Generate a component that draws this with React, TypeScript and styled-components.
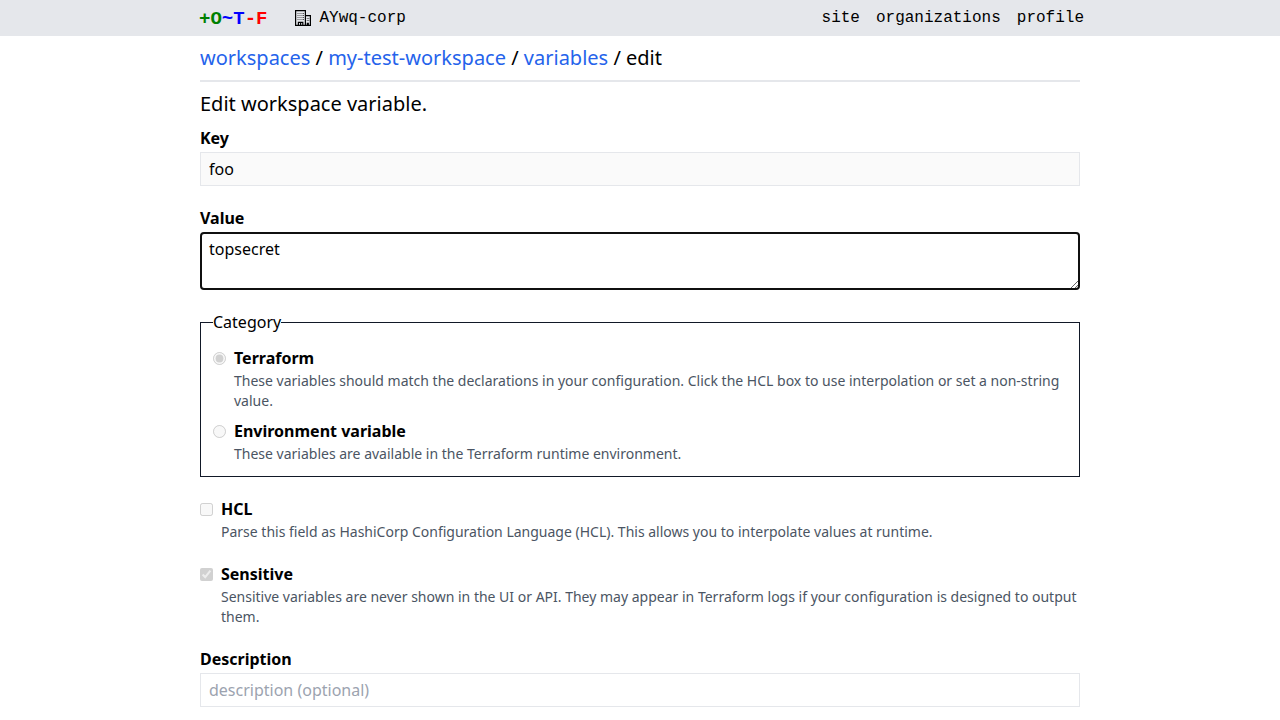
import React from "react";
import styled, { createGlobalStyle } from "styled-components";

const GlobalStyle = createGlobalStyle`
  *, *::before, *::after { box-sizing: border-box; }
  body {
    margin: 0;
    background: #fff;
    color: #000;
    font-family: "Noto Sans", sans-serif;
    font-size: 16px;
    line-height: 24px;
  }
  a { text-decoration: none; }
`;

const Header = styled.header`
  background: #e5e7eb;
  font-family: "Liberation Mono", monospace;
`;

const HeaderInner = styled.div`
  display: flex;
  align-items: center;
  max-width: 888px;
  height: 36px;
  margin: 0 auto;
`;

const Logo = styled.a`
  padding: 2px 0 0 3px;
  font-size: 19px;
  font-weight: 700;
  color: green;
`;

const LogoPart = styled.span<{ $color: string }>`
  color: ${(p) => p.$color};
`;

const OrgLink = styled.a`
  display: flex;
  align-items: center;
  gap: 8px;
  margin-left: 28px;
  color: #000;
  svg { display: block; }
`;

const Nav = styled.nav`
  display: flex;
  gap: 16px;
  margin-left: auto;
`;

const NavLink = styled.a`
  color: #000;
`;

const Main = styled.main`
  max-width: 880px;
  margin: 0 auto;
  padding: 8px 0 12px;
`;

const Breadcrumbs = styled.nav`
  padding-bottom: 8px;
  border-bottom: 2px solid #e5e7eb;
  font-size: 20px;
  line-height: 28px;
`;

const Crumb = styled.a`
  color: #2563eb;
`;

const Title = styled.h1`
  margin: 8px 0;
  font-size: 20px;
  font-weight: 400;
  line-height: 28px;
`;

const Form = styled.form`
  display: flex;
  flex-direction: column;
  gap: 20px;
`;

const Field = styled.div`
  display: flex;
  flex-direction: column;
  gap: 2px;
`;

const Label = styled.label`
  font-weight: 700;
`;

const TextInput = styled.input`
  width: 100%;
  padding: 4px 8px;
  border: 1px solid #e5e7eb;
  border-radius: 0;
  background: #fff;
  color: #000;
  font: inherit;
  &:read-only { background: #fafafa; }
  &::placeholder { color: #9ca3af; opacity: 1; }
`;

const TextArea = styled.textarea`
  display: block;
  width: 100%;
  padding: 4px 8px;
  border: 1px solid #e5e7eb;
  border-radius: 4px;
  outline: 2px solid #101010;
  outline-offset: -2px;
  color: #000;
  font: inherit;
`;

const Fieldset = styled.fieldset`
  display: flex;
  flex-direction: column;
  gap: 8px;
  min-width: 0;
  margin: 0;
  padding: 12px;
  border: 1px solid #111827;
`;

const Legend = styled.legend`
  padding: 0;
`;

const ChoiceRow = styled.div`
  display: grid;
  grid-template-columns: 13px 1fr;
  column-gap: 8px;
  row-gap: 1px;
`;

const ChoiceInput = styled.input`
  width: 13px;
  height: 13px;
  margin: 6px 0 0;
`;

const Help = styled.span`
  grid-column: 2;
  color: #4b5563;
  font-size: 14px;
  line-height: 20px;
`;

const windowRows = [3, 5, 7, 9];
const windowColumns = [2.6, 4.6, 6.6, 8.2];

function BuildingIcon() {
  return (
    <svg width="16" height="16" viewBox="0 0 16 16" aria-hidden="true">
      <path
        fill="#000"
        fillRule="evenodd"
        d="M0 0h11v5h5v11H0zM1.2 1.2v13.6h1.6v-3h5.6v3h1.4V1.2zM11 6.2v8.6h.7v-2h2.2v2h.9V6.2zM4 13v1.8h1V13zM6.2 13v1.8h1V13z"
      />
      {windowRows.map((y) =>
        windowColumns.map((x) => (
          <rect key={`${x}-${y}`} x={x} y={y} width=".8" height=".8" fill="#000" />
        )),
      )}
      <path
        fill="#000"
        d="M11.8 8h.8v.8h-.8zM13.4 8h.8v.8h-.8zM11.8 10h.8v.8h-.8zM13.4 10h.8v.8h-.8z"
      />
    </svg>
  );
}

interface ChoiceProps {
  id: string;
  type: "radio" | "checkbox";
  name: string;
  label: string;
  help: string;
  checked?: boolean;
}

function Choice({ id, type, name, label, help, checked }: ChoiceProps) {
  return (
    <ChoiceRow>
      <ChoiceInput
        id={id}
        type={type}
        name={name}
        defaultChecked={checked}
        aria-describedby={`${id}-help`}
        disabled
      />
      <Label htmlFor={id}>{label}</Label>
      <Help id={`${id}-help`}>{help}</Help>
    </ChoiceRow>
  );
}

export default function App() {
  return (
    <>
      <GlobalStyle />
      <Header>
        <HeaderInner>
          <Logo href="#">
            +O<LogoPart $color="blue">~T</LogoPart>
            <LogoPart $color="red">-F</LogoPart>
          </Logo>
          <OrgLink href="#">
            <BuildingIcon />
            <span>AYwq-corp</span>
          </OrgLink>
          <Nav>
            <NavLink href="#">site</NavLink>
            <NavLink href="#">organizations</NavLink>
            <NavLink href="#">profile</NavLink>
          </Nav>
        </HeaderInner>
      </Header>
      <Main>
        <Breadcrumbs>
          <Crumb href="#">workspaces</Crumb> / <Crumb href="#">my-test-workspace</Crumb> /{" "}
          <Crumb href="#">variables</Crumb> / edit
        </Breadcrumbs>
        <Title>Edit workspace variable.</Title>
        <Form>
          <Field>
            <Label htmlFor="key">Key</Label>
            <TextInput id="key" name="key" defaultValue="foo" readOnly />
          </Field>
          <Field>
            <Label htmlFor="value">Value</Label>
            <TextArea id="value" name="value" rows={2} defaultValue="topsecret" />
          </Field>
          <Fieldset>
            <Legend>Category</Legend>
            <Choice
              id="terraform"
              type="radio"
              name="category"
              label="Terraform"
              help="These variables should match the declarations in your configuration. Click the HCL box to use interpolation or set a non-string value."
              checked
            />
            <Choice
              id="env"
              type="radio"
              name="category"
              label="Environment variable"
              help="These variables are available in the Terraform runtime environment."
            />
          </Fieldset>
          <Choice
            id="hcl"
            type="checkbox"
            name="hcl"
            label="HCL"
            help="Parse this field as HashiCorp Configuration Language (HCL). This allows you to interpolate values at runtime."
          />
          <Choice
            id="sensitive"
            type="checkbox"
            name="sensitive"
            label="Sensitive"
            help="Sensitive variables are never shown in the UI or API. They may appear in Terraform logs if your configuration is designed to output them."
            checked
          />
          <Field>
            <Label htmlFor="description">Description</Label>
            <TextInput id="description" name="description" placeholder="description (optional)" />
          </Field>
        </Form>
      </Main>
    </>
  );
}
